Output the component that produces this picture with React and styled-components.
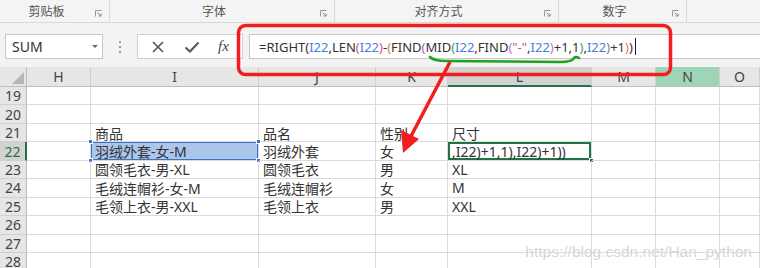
import React from "react";
import styled, { createGlobalStyle, css } from "styled-components";

const GlobalStyle = createGlobalStyle`
  html, body {
    margin: 0;
    padding: 0;
    background: #fff;
    overflow: hidden;
  }
  * {
    box-sizing: border-box;
  }
`;

const CJK = `"Noto Sans", "Noto Sans CJK SC", sans-serif`;

const Frame = styled.div`
  position: relative;
  width: 760px;
  height: 268px;
  overflow: hidden;
  display: flex;
  flex-direction: column;
  font-family: ${CJK};
  background: #fff;
`;

/* ---------- ribbon ---------- */
const Ribbon = styled.div`
  display: flex;
  height: 23px;
  flex: none;
  background: #f4f4f4;
  border-bottom: 1px solid #d8d8d8;
`;

const RibbonGroup = styled.div`
  position: relative;
  flex: none;
  width: ${(p) => p.$w}px;
  display: flex;
  align-items: center;
  justify-content: center;
  padding-right: 16px;
  border-right: ${(p) => (p.$last ? "none" : "1px solid #d9d9d9")};
  font-size: 12px;
  color: #555;
  margin-top: -1px;
`;

const Launcher = styled.svg`
  position: absolute;
  right: 7px;
  top: 11px;
`;

/* ---------- formula bar ---------- */
const FormulaBar = styled.div`
  display: flex;
  align-items: flex-start;
  height: 44px;
  flex: none;
  padding: 11px 0 0 5px;
  background: #f3f3f3;
`;

const NameBox = styled.div`
  display: flex;
  align-items: center;
  justify-content: space-between;
  width: 98px;
  height: 25px;
  padding: 0 4px 0 6px;
  background: #fff;
  border: 1px solid #c8c8c8;
  font-size: 14px;
  color: #333;
`;

const Caret = styled.span`
  width: 0;
  height: 0;
  border-left: 3px solid transparent;
  border-right: 3px solid transparent;
  border-top: 3px solid #666;
`;

const Grip = styled.div`
  display: flex;
  flex-direction: column;
  gap: 3px;
  width: 34px;
  height: 25px;
  align-items: center;
  justify-content: center;
`;

const GripDot = styled.span`
  width: 2px;
  height: 2px;
  background: #9a9a9a;
`;

const ButtonBox = styled.div`
  display: flex;
  align-items: center;
  justify-content: space-around;
  width: 106px;
  height: 25px;
  padding: 0 4px;
  background: #fff;
  border: 1px solid #d0d0d0;
  color: #555;
`;

const Fx = styled.span`
  font-family: "Liberation Serif", serif;
  font-style: italic;
  font-size: 15px;
  color: #444;
`;

const FormulaInput = styled.div`
  flex: 1;
  height: 25px;
  margin-left: 6px;
  display: flex;
  align-items: center;
  padding-left: 9px;
  background: #fff;
  border: 1px solid #c8c8c8;
  border-right: none;
  font-size: 13px;
  color: #333;
  white-space: nowrap;
`;

const Tok = styled.span`
  color: ${(p) => p.$c || "#333"};
`;

const TextCursor = styled.span`
  display: inline-block;
  width: 1px;
  height: 17px;
  background: #222;
  margin-left: 2px;
`;

/* ---------- sheet ---------- */
const Sheet = styled.div`
  display: grid;
  grid-template-columns: 27px 64px 168px 117px 72px 144px 64px 64px 1fr;
  grid-template-rows: 20px;
  grid-auto-rows: 18.45px;
  flex: none;
`;

const ColHead = styled.div`
  display: flex;
  align-items: center;
  justify-content: center;
  background: ${(p) => p.$bg || "#e6e6e6"};
  border-right: 1px solid #cfcfcf;
  border-bottom: ${(p) => (p.$active ? "2px solid #217346" : "1px solid #bdbdbd")};
  font-size: 14px;
  color: #444;
`;

const Corner = styled.div`
  position: relative;
  background: #e6e6e6;
  border-right: 1px solid #bdbdbd;
  border-bottom: 1px solid #bdbdbd;
  &::after {
    content: "";
    position: absolute;
    right: 2px;
    bottom: 2px;
    border-left: 12px solid transparent;
    border-bottom: 12px solid #b6b6b6;
  }
`;

const RowHead = styled.div`
  display: flex;
  align-items: center;
  justify-content: center;
  background: ${(p) => (p.$active ? "#d2d2d2" : "#e6e6e6")};
  border-right: ${(p) => (p.$active ? "2px solid #217346" : "1px solid #bdbdbd")};
  border-bottom: 1px solid #d0d0d0;
  font-size: 14px;
  color: ${(p) => (p.$active ? "#217346" : "#444")};
`;

const Cell = styled.div`
  position: relative;
  display: flex;
  align-items: center;
  padding-left: 4px;
  border-right: 1px solid #dadada;
  border-bottom: 1px solid #dadada;
  font-size: 14px;
  color: #333;
  white-space: nowrap;
  overflow: visible;
  ${(p) =>
    p.$ref &&
    css`
      background: #abc5eb;
      box-shadow: inset 0 0 0 1px #3d72c9;
    `}
  ${(p) =>
    p.$active &&
    css`
      box-shadow: inset 0 0 0 2px #217346;
    `}
`;

const Handle = styled.span`
  position: absolute;
  width: 5px;
  height: 5px;
  background: ${(p) => p.$c};
  border: 1px solid #fff;
  ${(p) => (p.$top ? "top: -3px;" : "bottom: -3px;")}
  ${(p) => (p.$left ? "left: -3px;" : "right: -3px;")}
`;

/* ---------- annotations ---------- */
const Overlay = styled.svg`
  position: absolute;
  left: 0;
  top: 0;
  pointer-events: none;
`;

const Watermark = styled.div`
  position: absolute;
  right: 8px;
  bottom: 7px;
  font-family: "Liberation Sans", Arial, sans-serif;
  font-size: 15.5px;
  color: rgba(195, 195, 195, 0.7);
  text-shadow: 0 0 1px #fff;
  pointer-events: none;
`;

const groups = [
  { label: "剪贴板", w: 110 },
  { label: "字体", w: 225 },
  { label: "对齐方式", w: 224 },
  { label: "数字", w: 128 },
  { label: "", w: 73, last: true },
];

const columns = [
  { key: "H" },
  { key: "I" },
  { key: "J" },
  { key: "K" },
  { key: "L", bg: "#d2d2d2", active: true },
  { key: "M" },
  { key: "N", bg: "#9fd5b7" },
  { key: "O" },
];

const rows = [
  { n: 19, cells: [] },
  { n: 20, cells: [] },
  { n: 21, cells: ["", "商品", "品名", "性别", "尺寸"] },
  { n: 22, cells: ["", "羽绒外套-女-M", "羽绒外套", "女", ",I22)+1,1),I22)+1))"], active: true },
  { n: 23, cells: ["", "圆领毛衣-男-XL", "圆领毛衣", "男", "XL"] },
  { n: 24, cells: ["", "毛绒连帽衫-女-M", "毛绒连帽衫", "女", "M"] },
  { n: 25, cells: ["", "毛领上衣-男-XXL", "毛领上衣", "男", "XXL"] },
  { n: 26, cells: [] },
  { n: 27, cells: [] },
  { n: 28, cells: [] },
];

const REF = "#4a7fd6";
const formula = [
  ["=RIGHT("],
  ["I22", REF],
  [",LEN"],
  ["(", "#d9508a"],
  ["I22", REF],
  [")", "#d9508a"],
  ["-"],
  ["(", "#e07a5a"],
  ["FIND"],
  ["(", "#a05fc0"],
  ["MID"],
  ["(", "#3ea53e"],
  ["I22", REF],
  [",FIND"],
  ["(", "#c46fd0"],
  ['"-"', "#d9508a"],
  [","],
  ["I22", REF],
  [")", "#c46fd0"],
  ["+1,1"],
  [")", "#3ea53e"],
  [","],
  ["I22", REF],
  [")", "#a05fc0"],
  ["+1"],
  [")", "#e07a5a"],
  [")"],
];

const App = () => {
  return (
    <Frame>
      <GlobalStyle />
      <Ribbon>
        {groups.map((g, i) => (
          <RibbonGroup key={i} $w={g.w} $last={g.last}>
            {g.label}
            {g.label && (
              <Launcher width="7" height="7" viewBox="0 0 7 7">
                <path d="M0.5 6.5V0.5H6.5" fill="none" stroke="#999" />
                <path d="M2.5 2.5L6 6M6 3.5V6H3.5" fill="none" stroke="#888" />
              </Launcher>
            )}
          </RibbonGroup>
        ))}
      </Ribbon>

      <FormulaBar>
        <NameBox>
          SUM
          <Caret />
        </NameBox>
        <Grip>
          <GripDot />
          <GripDot />
          <GripDot />
        </Grip>
        <ButtonBox>
          <svg width="14" height="14" viewBox="0 0 14 14">
            <path d="M2 2L12 12M12 2L2 12" stroke="#555" strokeWidth="1.6" />
          </svg>
          <svg width="16" height="14" viewBox="0 0 16 14">
            <path d="M1.5 7.5L6 11.5L14.5 2.5" fill="none" stroke="#555" strokeWidth="2" />
          </svg>
          <Fx>fx</Fx>
        </ButtonBox>
        <FormulaInput>
          {formula.map(([t, c], i) => (
            <Tok key={i} $c={c}>
              {t}
            </Tok>
          ))}
          <TextCursor />
        </FormulaInput>
      </FormulaBar>

      <Sheet>
        <Corner />
        {columns.map((c) => (
          <ColHead key={c.key} $bg={c.bg} $active={c.active}>
            {c.key}
          </ColHead>
        ))}
        {rows.map((r) => (
          <React.Fragment key={r.n}>
            <RowHead $active={r.active}>{r.n}</RowHead>
            {columns.map((c, ci) => {
              const isRef = r.n === 22 && c.key === "I";
              const isActive = r.n === 22 && c.key === "L";
              return (
                <Cell key={c.key} $ref={isRef} $active={isActive}>
                  {r.cells[ci] || ""}
                  {isRef && (
                    <>
                      <Handle $c="#3d72c9" $top $left />
                      <Handle $c="#3d72c9" $top />
                      <Handle $c="#3d72c9" $left />
                      <Handle $c="#3d72c9" />
                    </>
                  )}
                  {isActive && <Handle $c="#217346" />}
                </Cell>
              );
            })}
          </React.Fragment>
        ))}
      </Sheet>

      <Watermark>https://blog.csdn.net/Han_python</Watermark>

      <Overlay width="760" height="268" viewBox="0 0 760 268">
        <rect x="238.5" y="25.5" width="432" height="49" rx="7" fill="none" stroke="#f21d1d" strokeWidth="3.5" />
        <path
          d="M430 57 Q434 61 446 61 L560 62 Q572 62 574 58 Q576 56 579 58"
          fill="none"
          stroke="#1fa31f"
          strokeWidth="2.6"
          strokeLinecap="round"
        />
        <path d="M450 62 L409 140" stroke="#f21d1d" strokeWidth="3.5" />
        <path d="M403 153 L401 130 L419 139 Z" fill="#f21d1d" />
      </Overlay>
    </Frame>
  );
};

export default App;
